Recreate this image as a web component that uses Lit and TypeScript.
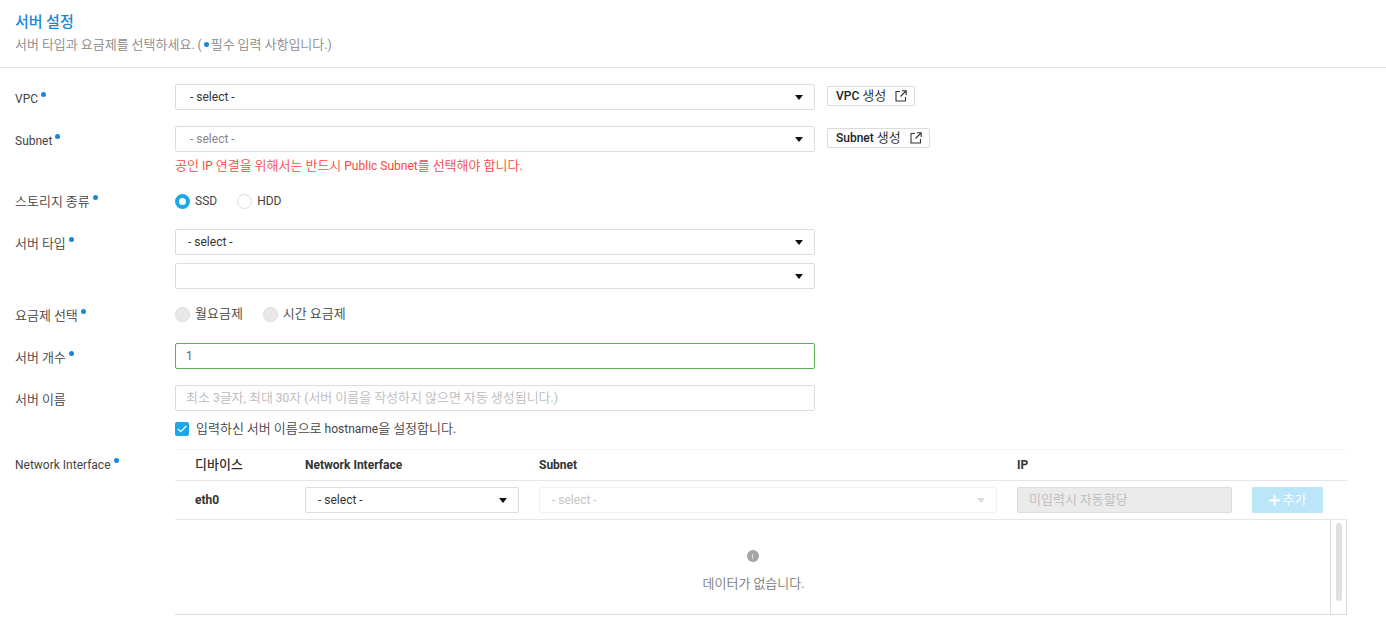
import { LitElement, html, css, svg } from "lit";
import { customElement } from "lit/decorators.js";

const ext = svg`<svg class="ext" width="12" height="12" viewBox="0 0 12 12" fill="none" stroke="#333" stroke-width="1.1"><path d="M5 1.500H1v9.500h9.500V7"/><path d="M7 .8h4.200V5M11 1 5.500 6.500"/></svg>`;

// The Hangul in the reference runs wider than the Latin next to it, so Hangul runs get their own size.
const k = (t: string) =>
  t.split(/([\uac00-\ud7a3]+)/).map((p, i) => (i % 2 ? html`<span class="k">${p}</span>` : p));

@customElement("app-root")
export class AppRoot extends LitElement {
  static styles = css`
    :host { display: block; width: 1386px; height: 625px; overflow: hidden; background: #fff; color: #333;
      font: 12px/18px Roboto, "Noto Sans CJK KR", sans-serif; }
    * { box-sizing: border-box; }
    .k { font-size: 13px; font-weight: 350; }
    .head { height: 68px; padding: 13px 15px 0; border-bottom: 1px solid #e4e4e4; }
    .title { font-size: 14px; line-height: 18px; font-weight: 500; color: #1a86d8; }
    .title .k { font-size: 15px; font-weight: 500; }
    .sub { margin-top: 5px; color: #888; line-height: 18px; display: flex; align-items: center; white-space: pre; }
    .dot { display: inline-block; width: 5px; height: 5px; border-radius: 50%; background: #1a86d8; }
    .sub .dot { margin: 0 2px 2px 2px; }
    .form { padding: 16px 0 0 15px; }
    .row { display: grid; grid-template-columns: 160px 1fr; }
    .label { display: flex; align-items: flex-start; line-height: 18px; padding-top: 6px; color: #444; white-space: pre; }
    .label.tight { padding-top: 3px; }
    .label .dot { margin: 2px 0 0 3px; }
    .line { display: flex; align-items: flex-start; gap: 12px; }
    .field { width: 640px; height: 26px; border: 1px solid #ddd; border-radius: 2px; display: flex; align-items: center;
      justify-content: space-between; padding: 0 11px 0 14px; color: #333; background: #fff; }
    .field.faint { color: #888; }
    .caret { width: 0; height: 0; border-left: 4.500px solid transparent; border-right: 4.500px solid transparent; border-top: 5px solid #111; }
    .btn { height: 20px; margin-top: 2px; padding: 0 7px 0 8px; border: 1px solid #ddd; border-radius: 1px; display: flex; align-items: center;
      gap: 9px; color: #222; font-weight: 500; background: #fff; white-space: pre; }
    .ext { display: block; }
    .error { margin-top: 5px; color: #f54a45; line-height: 18px; }
    .radios { display: flex; align-items: center; height: 18px; margin-top: 2px; }
    .radio { display: flex; align-items: center; gap: 5px; margin-right: 20px; color: #444; white-space: pre; }
    .r { width: 15px; height: 15px; border-radius: 50%; border: 1px solid #ddd; background: #fff; }
    .r.on { border: 4.500px solid #1ba8e8; }
    .r.off { background: #e8e8e8; }
    .stack { display: flex; flex-direction: column; gap: 8px; }
    .stack .field { padding-left: 12px; }
    .input { width: 640px; height: 26px; border: 1px solid #ddd; border-radius: 2px; padding: 0 10px; display: flex; align-items: center; white-space: pre; }
    .input.ok { border-color: #55b255; color: #666; }
    .input.ph { color: #bbb; }
    .check { display: flex; align-items: center; gap: 7px; margin-top: 9px; height: 18px; color: #444; white-space: pre; }
    .box { width: 14px; height: 14px; border-radius: 2px; background: #1ba8e8; display: flex; align-items: center; justify-content: center; }
    .tbl { width: 1172px; margin-top: -1px; }
    .cols { display: grid; grid-template-columns: 130px 214px 20px 458px 20px 215px 20px 71px 24px; align-items: center; }
    .thead { height: 32px; border-top: 1px solid #f5f5f5; border-bottom: 1px solid #e6e6e6; font-weight: 700; color: #333; }
    .thead .k { font-weight: 500; }
    .thead > span:first-child, .tbody .eth { padding-left: 20px; }
    .tbody { height: 39px; border-bottom: 1px solid #e6e6e6; }
    .eth { font-weight: 700; }
    .cell { height: 26px; border: 1px solid #ddd; border-radius: 2px; display: flex; align-items: center; justify-content: space-between; padding: 0 11px 0 12px; }
    .cell.dis { border-color: #f0f0f0; color: #c4c4c4; }
    .cell.dis .caret { border-top-color: #ddd; }
    .cell.ip { background: #ebebeb; border-color: #ddd; color: #bbb; padding-left: 11px; white-space: pre; }
    .add { height: 26px; border-radius: 2px; background: #bbe5f9; color: #fff; font-weight: 500; display: flex; align-items: center; justify-content: center; gap: 3px; }
    .empty { height: 95px; display: flex; border-bottom: 1px solid #ddd; border-right: 1px solid #ddd; }
    .msg { flex: 1; border-right: 1px solid #ddd; display: flex; flex-direction: column; align-items: center; padding: 30px 0 0 2px; color: #777; }
    .info { width: 12px; height: 12px; border-radius: 50%; background: #a5a5a5; display: flex; align-items: center; justify-content: center; margin: 0 0 13px -2px; }
    .info i { width: 1px; height: 5px; background: #ddd; }
    .bar { width: 15px; padding: 3px 5px 0 5px; }
    .thumb { width: 6px; height: 78px; border-radius: 3px; background: #e0e0e0; }
  `;

  private req() { return html`<span class="dot"></span>`; }
  private lab(t: string, r = true, tight = false) {
    return html`<div class="label ${tight ? "tight" : ""}"><span>${k(t)}</span>${r ? this.req() : ""}</div>`;
  }

  render() {
    return html`
      <div class="head">
        <div class="title">${k("서버 설정")}</div>
        <div class="sub"><span>${k("서버 타입과 요금제를 선택하세요. (")}</span><span class="dot"></span><span>${k("필수 입력 사항입니다.)")}</span></div>
      </div>
      <div class="form">
        <div class="row" style="height:42px">
          ${this.lab("VPC")}
          <div class="line">
            <div class="field"><span>- select -</span><span class="caret"></span></div>
            <div class="btn"><span>VPC ${k("생성")}</span>${ext}</div>
          </div>
        </div>
        <div class="row" style="height:64px">
          ${this.lab("Subnet")}
          <div>
            <div class="line">
              <div class="field faint"><span>- select -</span><span class="caret"></span></div>
              <div class="btn"><span>Subnet ${k("생성")}</span>${ext}</div>
            </div>
            <div class="error">${k("공인 IP 연결을 위해서는 반드시 Public Subnet를 선택해야 합니다.")}</div>
          </div>
        </div>
        <div class="row" style="height:39px">
          ${this.lab("스토리지 종류", true, true)}
          <div class="radios">
            <div class="radio"><span class="r on"></span>SSD</div>
            <div class="radio"><span class="r"></span>HDD</div>
          </div>
        </div>
        <div class="row" style="height:72px">
          ${this.lab("서버 타입")}
          <div class="stack">
            <div class="field"><span>- select -</span><span class="caret"></span></div>
            <div class="field"><span></span><span class="caret"></span></div>
          </div>
        </div>
        <div class="row" style="height:42px">
          ${this.lab("요금제 선택")}
          <div class="radios" style="margin-top:4px">
            <div class="radio"><span class="r off"></span><span>${k("월요금제")}</span></div>
            <div class="radio"><span class="r off"></span><span>${k("시간 요금제")}</span></div>
          </div>
        </div>
        <div class="row" style="height:42px">
          ${this.lab("서버 개수")}
          <div class="input ok">1</div>
        </div>
        <div class="row" style="height:65px">
          ${this.lab("서버 이름", false)}
          <div>
            <div class="input ph"><span>${k("최소 3글자, 최대 30자 (서버 이름을 작성하지 않으면 자동 생성됩니다.)")}</span></div>
            <div class="check">
              <span class="box"><svg width="10" height="8" viewBox="0 0 10 8" fill="none" stroke="#fff" stroke-width="1.200"><path d="M.8 3.800 3.700 6.700 9.300 1"/></svg></span>
              <span>${k("입력하신 서버 이름으로 hostname을 설정합니다.")}</span>
            </div>
          </div>
        </div>
        <div class="row">
          ${this.lab("Network Interface")}
          <div class="tbl">
            <div class="cols thead">
              <span>${k("디바이스")}</span><span>Network Interface</span><span></span><span>Subnet</span><span></span><span>IP</span>
            </div>
            <div class="cols tbody">
              <span class="eth">eth0</span>
              <div class="cell"><span>- select -</span><span class="caret"></span></div>
              <span></span>
              <div class="cell dis"><span>- select -</span><span class="caret"></span></div>
              <span></span>
              <div class="cell ip"><span>${k("미입력시 자동할당")}</span></div>
              <span></span>
              <div class="add"><svg width="11" height="11" viewBox="0 0 11 11" fill="#fff"><path d="M4.600 0h1.800v4.600H11v1.800H6.400V11H4.600V6.400H0V4.600h4.600z"/></svg><span>${k("추가")}</span></div>
            </div>
            <div class="empty">
              <div class="msg"><span class="info"><i></i></span><span>${k("데이터가 없습니다.")}</span></div>
              <div class="bar"><div class="thumb"></div></div>
            </div>
          </div>
        </div>
      </div>
    `;
  }
}
